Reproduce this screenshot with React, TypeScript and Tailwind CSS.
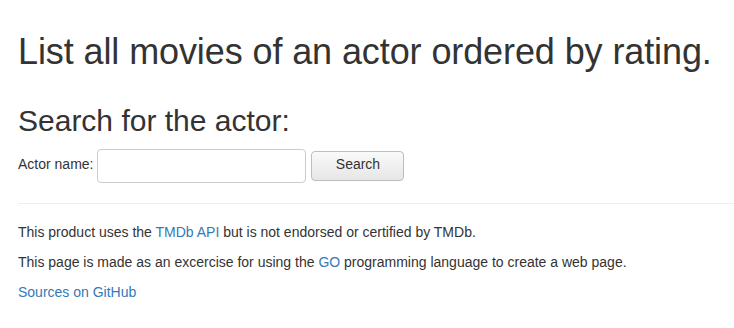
export default function App() {
  return (
    <div className="min-h-screen bg-white pl-[18px] pt-[32px] font-['Liberation_Sans',Arial,sans-serif] text-[14px] leading-[20px] text-[#333]">
      <h1 className="text-[36px] leading-[39.6px] font-normal tracking-[-0.1px]">
        List all movies of an actor ordered by rating.
      </h1>
      <h2 className="mt-[32px] text-[30px] leading-[33px] font-normal">
        Search for the actor:
      </h2>
      <form className="mt-[12px] flex items-center" onSubmit={(e) => e.preventDefault()}>
        <label htmlFor="actor" className="mr-[4px] mb-[3px]">
          Actor name:
        </label>
        <input
          id="actor"
          type="text"
          className="h-[34px] w-[209px] rounded-[4px] border border-[#ccc] bg-white px-[8px] outline-none"
        />
        <button
          type="submit"
          className="ml-[5px] h-[30px] w-[93px] rounded-[4px] border border-[#bdbdbd] bg-gradient-to-b from-[#fafafa] to-[#e6e6e6] pb-[4px] text-[14px] text-[#333]"
        >
          Search
        </button>
      </form>
      <hr className="mt-[20px] border-0 border-t border-[#eee]" />
      <div className="pt-[18px]">
        <p className="mb-[10px]">
          This product uses the <a href="#" className="text-[#337ab7]">TMDb API</a> but is not endorsed or certified by TMDb.
        </p>
        <p className="mb-[10px]">
          This page is made as an excercise for using the <a href="#" className="text-[#337ab7]">GO</a> programming language to create a web page.
        </p>
        <p>
          <a href="#" className="text-[#337ab7]">Sources on GitHub</a>
        </p>
      </div>
    </div>
  );
}
